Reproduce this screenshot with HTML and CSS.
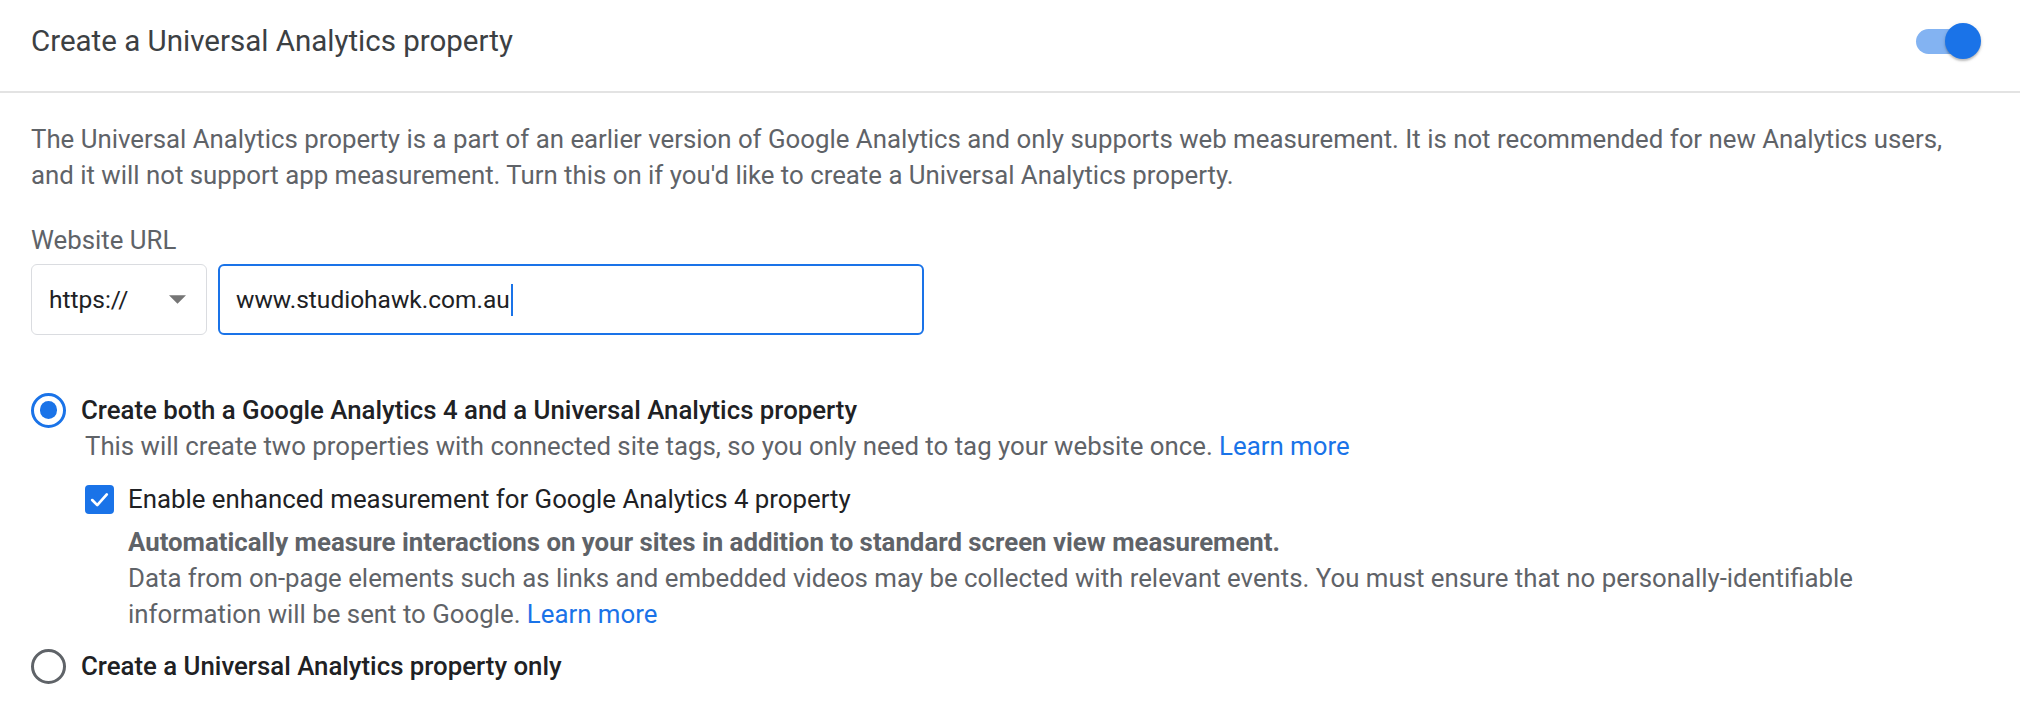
FILE: index.html
```html
<!DOCTYPE html>
<html lang="en">
<head>
<meta charset="utf-8">
<title>Create a Universal Analytics property</title>
<link rel="stylesheet" href="styles.css">
</head>
<body>
<section class="card">
  <header class="head">
    <h2 class="title">Create a Universal Analytics property</h2>
    <div class="toggle" role="switch" aria-checked="true">
      <span class="track"></span>
      <span class="knob"></span>
    </div>
  </header>
  <div class="content">
    <p class="desc">The Universal Analytics property is a part of an earlier version of Google Analytics and only supports web measurement. It is not recommended for new Analytics users,<br>and it will not support app measurement. Turn this on if you'd like to create a Universal Analytics property.</p>
    <div class="field">
      <div class="field-label">Website URL</div>
      <div class="url-row">
        <div class="select">
          <span class="select-value">https://</span>
          <svg class="arrow" viewBox="0 0 10 5" aria-hidden="true"><path d="M0 0L5 5L10 0Z" fill="#757575"/></svg>
        </div>
        <div class="input">
          <span class="input-value">www.studiohawk.com.au</span><span class="caret"></span>
        </div>
      </div>
    </div>
    <div class="options">
      <div class="option">
        <div class="radio-row">
          <span class="radio checked"></span>
          <span class="radio-label">Create both a Google Analytics 4 and a Universal Analytics property</span>
        </div>
        <div class="option-body">
          <div class="option-sub">This will create two properties with connected site tags, so you only need to tag your website once. <a class="link" href="#">Learn more</a></div>
          <div class="check-row">
            <span class="checkbox">
              <svg viewBox="0 0 24 24" aria-hidden="true"><path d="M5.5 12.5L10 17L18.5 7.5" fill="none" stroke="#fff" stroke-width="2.4" stroke-linecap="round" stroke-linejoin="round"/></svg>
            </span>
            <div class="check-text">
              <div class="check-label">Enable enhanced measurement for Google Analytics 4 property</div>
              <div class="check-strong">Automatically measure interactions on your sites in addition to standard screen view measurement.</div>
              <div class="check-sub">Data from on-page elements such as links and embedded videos may be collected with relevant events. You must ensure that no personally-identifiable<br>information will be sent to Google. <a class="link" href="#">Learn more</a></div>
            </div>
          </div>
        </div>
      </div>
      <div class="option option-last">
        <div class="radio-row">
          <span class="radio"></span>
          <span class="radio-label">Create a Universal Analytics property only</span>
        </div>
      </div>
    </div>
  </div>
</section>
</body>
</html>
```

FILE: styles.css
```css
html, body {
  margin: 0;
  padding: 0;
  background: #ffffff;
}

body {
  font-family: Roboto, "Liberation Sans", Arial, sans-serif;
  font-size: 25.8px;
  line-height: 36px;
  color: #202124;
}

.card {
  width: 2020px;
}

.head {
  height: 82px;
  padding: 0 39px 9px 31px;
  display: flex;
  align-items: center;
  justify-content: space-between;
  border-bottom: 2px solid #e3e3e3;
}

.title {
  margin: 0;
  font-family: Roboto, "Liberation Sans", sans-serif;
  font-size: 29.5px;
  font-weight: 400;
  color: #3c4043;
  line-height: 36px;
}

.toggle {
  position: relative;
  width: 65px;
  height: 36px;
}

.track {
  position: absolute;
  left: 0;
  right: 2px;
  top: 5.5px;
  height: 25px;
  border-radius: 13px;
  background: #83b3f2;
}

.knob {
  position: absolute;
  right: 0;
  top: 0;
  width: 36px;
  height: 36px;
  border-radius: 50%;
  background: #1a73e8;
  box-shadow: 0 2px 2px rgba(0,0,0,0.2), 0 1px 4px rgba(0,0,0,0.12);
}

.content {
  padding: 28px 39px 0 31px;
}

.desc {
  margin: 0;
  color: #5f6368;
  white-space: nowrap;
}

.field {
  margin-top: 29px;
}

.field-label {
  color: #5f6368;
}

.url-row {
  margin-top: 6px;
  display: flex;
  gap: 11px;
}

.select {
  box-sizing: border-box;
  width: 176px;
  height: 71px;
  border: 1.5px solid #dadce0;
  border-radius: 6px;
  display: flex;
  align-items: center;
  padding: 0 20px 0 17px;
  justify-content: space-between;
  color: #202124;
  font-size: 24.5px;
}

.arrow {
  width: 17px;
  height: 9px;
}

.input {
  box-sizing: border-box;
  width: 706px;
  height: 71px;
  border: 2.5px solid #1a73e8;
  border-radius: 6px;
  display: flex;
  align-items: center;
  padding: 0 16px;
  color: #202124;
  font-size: 24.5px;
}

.caret {
  display: inline-block;
  width: 2px;
  height: 32px;
  margin-left: 1px;
  background: #1a73e8;
}

.options {
  margin-top: 57px;
}

.radio-row {
  display: flex;
  align-items: center;
  gap: 15px;
}

.radio {
  box-sizing: border-box;
  width: 35px;
  height: 35px;
  border-radius: 50%;
  border: 3.5px solid #5f6368;
  display: flex;
  align-items: center;
  justify-content: center;
  flex: none;
}

.radio.checked {
  border-color: #1a73e8;
}

.radio.checked::after {
  content: "";
  width: 17.5px;
  height: 17.5px;
  border-radius: 50%;
  background: #1a73e8;
}

.radio-label {
  font-weight: 500;
  color: #202124;
}

.option-body {
  padding-left: 54px;
}

.option-sub {
  color: #5f6368;
}

.link {
  color: #1a73e8;
  text-decoration: none;
}

.check-row {
  margin-top: 17px;
  display: flex;
  align-items: flex-start;
  gap: 14px;
}

.checkbox {
  box-sizing: border-box;
  width: 29px;
  height: 29px;
  margin-top: 3.5px;
  border-radius: 4px;
  background: #1a73e8;
  display: flex;
  align-items: center;
  justify-content: center;
  flex: none;
}

.checkbox svg {
  width: 27px;
  height: 27px;
}

.check-label {
  color: #202124;
}

.check-strong {
  margin-top: 7px;
  font-weight: 700;
  color: #5f6368;
}

.check-sub {
  color: #5f6368;
  white-space: nowrap;
}

.option-last {
  margin-top: 16px;
}
```
